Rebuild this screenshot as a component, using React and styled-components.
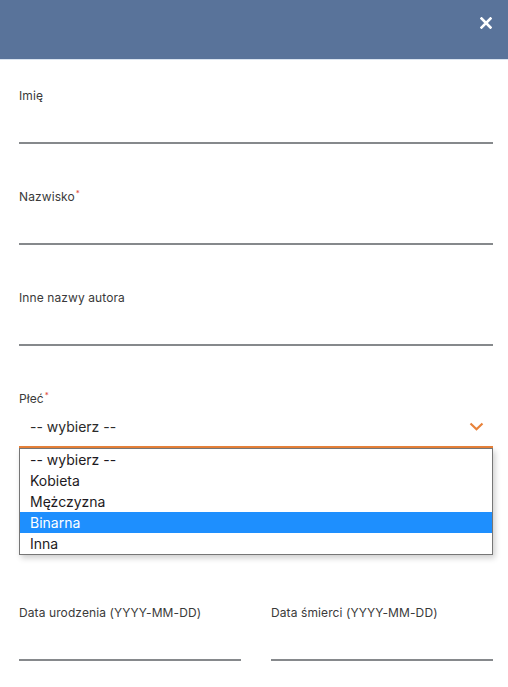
import React from 'react';
import styled, { createGlobalStyle } from 'styled-components';

const GlobalStyle = createGlobalStyle`
    html, body {
        margin: 0;
        padding: 0;
        background: #fff;
    }
    body {
        font-family: Inter, "Noto Sans", sans-serif;
        color: #333;
    }
`

const Modal = styled.div`
    width: 508px;
    height: 687px;
    overflow: hidden;
    background: #fff;
`

const Header = styled.div`
    height: 60px;
    background: #59739a;
    border-bottom: 1px solid #d9e3ef;
    display: flex;
    align-items: flex-start;
    justify-content: flex-end;
    padding: 17px 16px 0 0;
    box-sizing: border-box;
`

const CloseButton = styled.button`
    width: 12px;
    height: 12px;
    padding: 0;
    border: none;
    background: none;
    cursor: pointer;
    display: flex;
`

const Form = styled.div`
    padding: 27px 15px 0 19px;
    display: flex;
    flex-direction: column;
`

const Field = styled.div`
    display: flex;
    flex-direction: column;
    margin-bottom: ${p => p.$spacing ?? 44}px;
    position: relative;
    flex: 1;
    min-width: 0;
`

const Label = styled.label`
    font-size: 12px;
    line-height: 18px;
    color: #3a3a3a;
    letter-spacing: 0.1px;
`

const Required = styled.sup`
    color: #e0483e;
    font-size: 8px;
    vertical-align: top;
    line-height: 10px;
    margin-left: 1px;
`

const Input = styled.input`
    width: 100%;
    height: 39px;
    border: none;
    border-bottom: 2px solid #86898c;
    background: transparent;
    padding: 0 11px;
    font-family: inherit;
    font-size: 14px;
    outline: none;
    box-sizing: border-box;
`

const SelectBox = styled.div`
    height: 40px;
    border-bottom: 2px solid #e8823a;
    padding: 0 11px 2px;
    box-sizing: border-box;
    display: flex;
    align-items: center;
    justify-content: space-between;
    font-size: 14px;
    color: #2b2b2b;
`

const Chevron = styled.svg`
    width: 15px;
    height: 9px;
    margin-right: -2px;
`

const OptionList = styled.ul`
    position: absolute;
    top: 100%;
    left: 0;
    right: 0;
    margin: 0;
    padding: 0;
    list-style: none;
    background: #fff;
    border: 1px solid #767676;
    box-shadow: 2px 3px 6px rgba(0, 0, 0, 0.2);
    z-index: 2;
`

const Option = styled.li`
    height: 21px;
    line-height: 21px;
    padding: 0 10px;
    font-size: 14px;
    color: ${p => (p.$active ? '#fff' : '#1d1a22')};
    background: ${p => (p.$active ? '#1e8ffe' : 'transparent')};
`

const Row = styled.div`
    display: flex;
    gap: 30px;
    margin-top: 156px;
`

const options = ['-- wybierz --', 'Kobieta', 'Mężczyzna', 'Binarna', 'Inna']

const App = () => (
    <>
        <GlobalStyle />
        <Modal>
            <Header>
                <CloseButton aria-label="close">
                    <svg width="12" height="12" viewBox="0 0 12 12">
                        <path d="M1.5 1.5 L10.5 10.5 M10.5 1.5 L1.5 10.5" stroke="#fff" strokeWidth="2.6" strokeLinecap="square" />
                    </svg>
                </CloseButton>
            </Header>
            <Form>
                <Field>
                    <Label>Imię</Label>
                    <Input />
                </Field>
                <Field>
                    <Label>Nazwisko<Required>*</Required></Label>
                    <Input />
                </Field>
                <Field>
                    <Label>Inne nazwy autora</Label>
                    <Input />
                </Field>
                <Field $spacing={0}>
                    <Label>Płeć<Required>*</Required></Label>
                    <SelectBox>
                        <span>-- wybierz --</span>
                        <Chevron viewBox="0 0 15 9">
                            <path d="M1.5 1.5 L7.5 7.2 L13.5 1.5" fill="none" stroke="#e8823a" strokeWidth="2.2" />
                        </Chevron>
                    </SelectBox>
                    <OptionList>
                        {options.map(o => (
                            <Option key={o} $active={o === 'Binarna'}>{o}</Option>
                        ))}
                    </OptionList>
                </Field>
                <Row>
                    <Field>
                        <Label>Data urodzenia (YYYY-MM-DD)</Label>
                        <Input />
                    </Field>
                    <Field>
                        <Label>Data śmierci (YYYY-MM-DD)</Label>
                        <Input />
                    </Field>
                </Row>
            </Form>
        </Modal>
    </>
);

export default App;
